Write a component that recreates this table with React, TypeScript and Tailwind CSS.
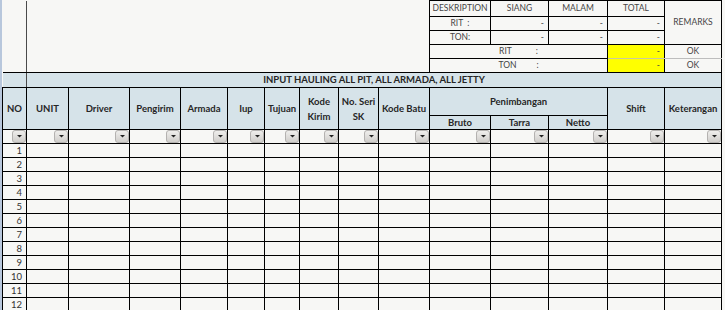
import React from "react";

const colW = [
  "w-[24px]", "w-[42px]", "w-[61px]", "w-[51px]", "w-[47px]",
  "w-[37px]", "w-[35px]", "w-[39px]", "w-[40px]", "w-[51px]",
  "w-[61px]", "w-[58px]", "w-[59px]", "w-[57px]", "w-[57px]",
];

const cell = "border border-black p-0";
const head = "border border-black p-0 bg-[#d6e3e9] text-center font-bold text-[#262626]";
const sum = "border border-black p-0 text-[8.5px] text-[#454545]";

function Drop() {
  return (
    <span className="flex h-[13px] w-[14px] items-center justify-center rounded-[3px] border border-[#b4b2b0] bg-linear-to-b from-[#efeeec] to-[#d0cecb]">
      <svg width="5" height="3" viewBox="0 0 5 3">
        <path d="M0 0h5L2.5 2.5z" fill="#222" />
      </svg>
    </span>
  );
}

export default function App() {
  const rows = Array.from({ length: 12 }, (_, i) => i + 1);

  return (
    <div
      className="h-[310px] w-[725px] overflow-hidden bg-[#f7f7f5] text-[9.5px] leading-none"
      style={{ fontFamily: "Lato, 'Open Sans', sans-serif" }}
    >
      <div className="w-[723px] border-l-2 border-[#b8c7dc]">
        <table className="w-[719px] table-fixed border-collapse">
          <colgroup>
            {colW.map((w, i) => (
              <col key={i} className={w} />
            ))}
          </colgroup>
          <tbody>
            {/* summary block */}
            <tr className="h-[16px]">
              <td rowSpan={5} className="border-0 border-r border-b border-r-[#4a4a4a] border-b-black p-0" />
              <td colSpan={9} rowSpan={5} className="border-0 border-r border-b border-black p-0" />
              <td className={`${sum} text-center`}>DESKRIPTION</td>
              <td className={`${sum} text-center`}>SIANG</td>
              <td className={`${sum} text-center`}>MALAM</td>
              <td className={`${sum} text-center`}>TOTAL</td>
              <td rowSpan={3} className={`${sum} text-center`}>REMARKS</td>
            </tr>
            <tr className="h-[14px]">
              <td className={`${sum} text-center`}>RIT&nbsp;&nbsp;:</td>
              <td className={`${sum} pr-[4px] text-right`}>-</td>
              <td className={`${sum} pr-[4px] text-right`}>-</td>
              <td className={`${sum} pr-[4px] text-right`}>-</td>
            </tr>
            <tr className="h-[14px]">
              <td className={`${sum} text-center`}>TON:</td>
              <td className={`${sum} pr-[4px] text-right`}>-</td>
              <td className={`${sum} pr-[4px] text-right`}>-</td>
              <td className={`${sum} pr-[4px] text-right`}>-</td>
            </tr>
            <tr className="h-[14px]">
              <td colSpan={3} className={`${sum} border-b-dotted text-center`}>
                RIT<span className="ml-[24px]">:</span>
              </td>
              <td className={`${sum} border-b-[#c9c9a0] bg-[#ffff00] pr-[4px] text-right`}>-</td>
              <td className={`${sum} border-b-[#bdbdbd] text-center`}>OK</td>
            </tr>
            <tr className="h-[14px]">
              <td colSpan={3} className={`${sum} border-t-0 text-center`}>
                TON<span className="ml-[20px]">:</span>
              </td>
              <td className={`${sum} border-t-0 bg-[#ffff00] pr-[4px] text-right`}>-</td>
              <td className={`${sum} border-t-0 text-center`}>OK</td>
            </tr>

            {/* title band */}
            <tr className="h-[15px]">
              <td className="border-0 border-r border-b border-r-[#4a4a4a] border-b-black bg-[#d6e3e9] p-0" />
              <td colSpan={14} className={head}>
                INPUT HAULING ALL PIT, ALL ARMADA, ALL JETTY
              </td>
            </tr>

            {/* column headers */}
            <tr className="h-[28px]">
              <td rowSpan={2} className={head}>NO</td>
              <td rowSpan={2} className={head}>UNIT</td>
              <td rowSpan={2} className={head}>Driver</td>
              <td rowSpan={2} className={head}>Pengirim</td>
              <td rowSpan={2} className={head}>Armada</td>
              <td rowSpan={2} className={head}>Iup</td>
              <td rowSpan={2} className={head}>Tujuan</td>
              <td rowSpan={2} className={`${head} leading-[15px]`}>
                Kode
                <br />
                Kirim
              </td>
              <td rowSpan={2} className={`${head} leading-[15px]`}>
                No. Seri
                <br />
                SK
              </td>
              <td rowSpan={2} className={head}>Kode Batu</td>
              <td colSpan={3} className={head}>Penimbangan</td>
              <td rowSpan={2} className={head}>Shift</td>
              <td rowSpan={2} className={head}>Keterangan</td>
            </tr>
            <tr className="h-[14px]">
              <td className={head}>Bruto</td>
              <td className={head}>Tarra</td>
              <td className={head}>Netto</td>
            </tr>

            {/* filter row */}
            <tr className="h-[14px]">
              {colW.map((_, i) => (
                <td key={i} className={cell}>
                  <div className="flex justify-end">
                    <Drop />
                  </div>
                </td>
              ))}
            </tr>

            {/* data rows */}
            {rows.map((n) => (
              <tr key={n} className="h-[14px]">
                <td className={`${cell} pr-[4px] text-right text-[#333]`}>{n}</td>
                {colW.slice(1).map((_, i) => (
                  <td key={i} className={cell} />
                ))}
              </tr>
            ))}
          </tbody>
        </table>
      </div>
    </div>
  );
}
